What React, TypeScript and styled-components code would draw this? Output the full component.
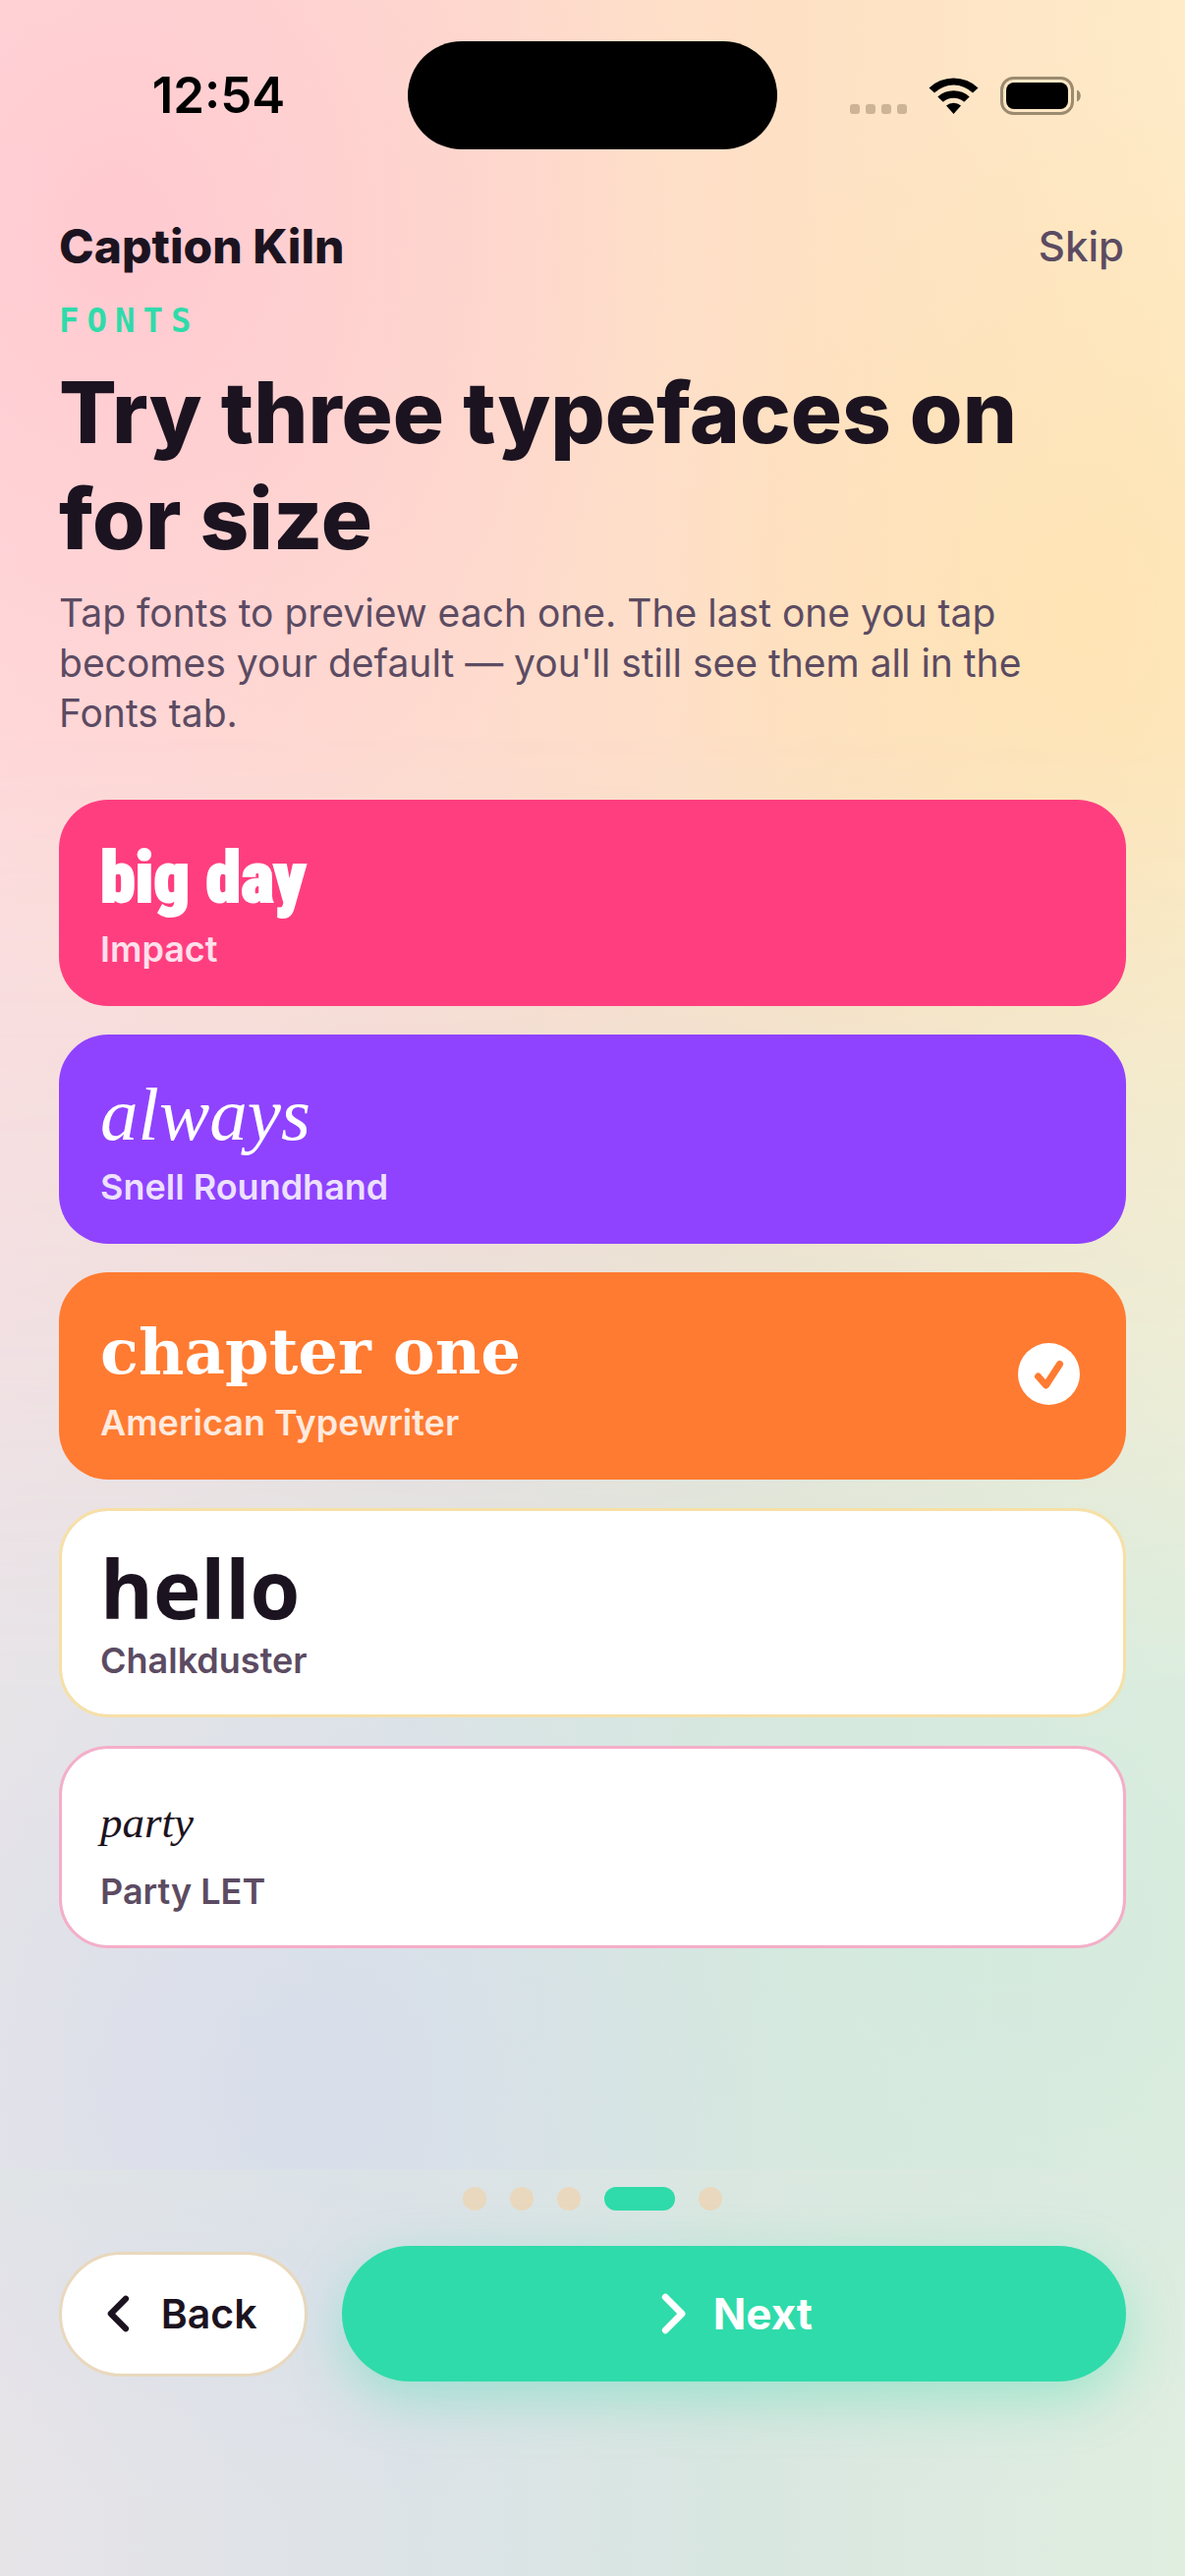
import { useState } from "react";
import styled, { createGlobalStyle, css } from "styled-components";

const ink = "#1c1320";
const muted = "#5c4b62";
const mint = "#2fdbaa";
const sand = "#e9d8bd";

const GlobalStyle = createGlobalStyle`
  *, *::before, *::after { box-sizing: border-box; }
  body {
    margin: 0;
    font-family: Inter, "Noto Sans", sans-serif;
    color: ${ink};
    -webkit-font-smoothing: antialiased;
  }
  button { font: inherit; color: inherit; cursor: pointer; }
`;

const Screen = styled.div`
  position: relative;
  isolation: isolate;
  display: flex;
  flex-direction: column;
  min-height: 100vh;
  background:
    radial-gradient(ellipse 46% 27% at 10% 9%, rgba(255, 194, 205, 0.7), transparent),
    radial-gradient(ellipse 36% 22% at 92% 24%, rgba(255, 224, 168, 0.6), transparent),
    linear-gradient(90deg, #ffdcdc 0%, #fedccd 42%, #fee1c4 68%, #feebc8 100%);

  &::before {
    content: "";
    position: absolute;
    inset: 0;
    z-index: -1;
    background:
      radial-gradient(ellipse 42% 17% at 24% 81%, rgba(213, 220, 236, 0.7), transparent),
      radial-gradient(ellipse 55% 22% at 86% 75%, rgba(208, 234, 220, 0.7), transparent),
      linear-gradient(90deg, #e7e4e8 0%, #dce3e7 35%, #d8e6e1 60%, #e0eee0 100%);
    mask-image: linear-gradient(180deg, transparent 28%, rgba(0, 0, 0, 0.5) 50%, #000 66%);
  }
`;

const StatusBar = styled.div`
  display: grid;
  grid-template-columns: 1fr 376px 1fr;
  align-items: center;
  height: 194px;
`;

const Clock = styled.time`
  padding-left: 30px;
  color: #000;
  text-align: center;
  font-size: 51px;
  font-weight: 600;
  line-height: 60px;
`;

const Island = styled.div`
  height: 110px;
  border-radius: 55px;
  background: #000;
`;

const StatusIcons = styled.div`
  display: flex;
  align-items: center;
  justify-content: flex-end;
  padding-right: 86px;
`;

const Header = styled.header`
  display: flex;
  align-items: center;
  justify-content: space-between;
  height: 114px;
  padding: 0 62px 0 60px;
`;

const Brand = styled.div`
  font-size: 48px;
  font-weight: 800;
  line-height: 60px;
`;

const SkipButton = styled.button`
  padding: 0;
  border: 0;
  background: none;
  color: ${muted};
  font-size: 42px;
  font-weight: 500;
  line-height: 60px;
`;

const Content = styled.main`
  flex: 1;
  padding: 0 60px 60px;
`;

const Eyebrow = styled.p`
  margin: 0;
  color: ${mint};
  font-family: "DejaVu Sans Mono", monospace;
  font-size: 34px;
  font-weight: 700;
  line-height: 36px;
  letter-spacing: 8px;
`;

const Title = styled.h1`
  margin: 22px 0 0;
  font-size: 87px;
  font-weight: 800;
  line-height: 108px;
`;

const Lead = styled.p`
  margin: 16px 0 0;
  color: ${muted};
  font-size: 39px;
  line-height: 51px;
`;

const FontList = styled.div`
  display: grid;
  gap: 29px;
  margin-top: 63px;
`;

const FontCard = styled.button<{ $fill?: string; $edge: string }>`
  display: flex;
  align-items: center;
  justify-content: space-between;
  width: 100%;
  padding: 28px 44px 32px 39px;
  border: 3px solid ${(p) => (p.$fill ? "transparent" : p.$edge)};
  border-radius: 50px;
  background: ${(p) => p.$fill ?? "#fff"};
  background-clip: ${(p) => (p.$fill ? "border-box" : "padding-box")};
  color: ${(p) => (p.$fill ? "#fff" : ink)};
  text-align: left;
`;

type Face = "impact" | "script" | "slab" | "chalk" | "party";

const faces: Record<Face, ReturnType<typeof css>> = {
  impact: css`
    font: 900 72px/98px Impact, "Roboto Condensed", Roboto, sans-serif;
    -webkit-text-stroke: 2px currentColor;
  `,
  script: css`
    font: italic 400 77px/101px "Snell Roundhand", "Liberation Serif", serif;
  `,
  slab: css`
    font: 700 64px/99px "American Typewriter", "DejaVu Serif", serif;
  `,
  chalk: css`
    font: 700 82px/101px Chalkduster, "Open Sans", sans-serif;
  `,
  party: css`
    font: italic 400 45px/94px "Party LET", "Liberation Serif", serif;
  `,
};

const Sample = styled.span<{ $face: Face }>`
  display: block;
  ${(p) => faces[p.$face]}
`;

const FaceName = styled.span<{ $onFill: boolean }>`
  display: block;
  color: ${(p) => (p.$onFill ? "rgba(255, 255, 255, 0.85)" : muted)};
  font-size: 36px;
  font-weight: 600;
  line-height: 46px;
`;

const Footer = styled.footer`
  display: grid;
  gap: 36px;
  padding: 18px 60px 198px;
  background: linear-gradient(180deg, rgba(224, 232, 226, 0.4), transparent 140px);
`;

const Dots = styled.div`
  display: flex;
  justify-content: center;
  gap: 24px;
`;

const Dot = styled.span<{ $active: boolean }>`
  width: ${(p) => (p.$active ? 72 : 24)}px;
  height: 24px;
  border-radius: 12px;
  background: ${(p) => (p.$active ? mint : sand)};
`;

const Actions = styled.div`
  display: flex;
  align-items: center;
  gap: 35px;
`;

const BackButton = styled.button`
  display: flex;
  align-items: center;
  gap: 32px;
  height: 127px;
  padding: 0 48px 0 46px;
  border: 3px solid ${sand};
  border-radius: 64px;
  background: #fff;
  font-size: 41px;
  font-weight: 600;
`;

const NextButton = styled.button`
  display: flex;
  flex: 1;
  align-items: center;
  justify-content: center;
  gap: 28px;
  height: 138px;
  padding: 0 0 0 6px;
  border: 0;
  border-radius: 69px;
  background: ${mint};
  box-shadow: 0 18px 54px rgba(47, 219, 170, 0.35);
  color: #fff;
  font-size: 44px;
  font-weight: 700;
`;

function SignalIcon() {
  return (
    <svg width="260" height="60" viewBox="860 67 260 60" fill="none" aria-hidden="true">
      <g fill="#cdb496">
        <rect x="865" y="106" width="10" height="10" rx="3" />
        <rect x="881" y="106" width="10" height="10" rx="3" />
        <rect x="897" y="106" width="10" height="10" rx="3" />
        <rect x="913" y="106" width="10" height="10" rx="3" />
      </g>
      <g fill="#000">
        <path d="M945.500 89.500a36 36 0 0 1 50 0l-5.500 5a28 28 0 0 0-39 0z" />
        <path d="M954.300 98.500a24 24 0 0 1 32.400 0l-5.500 5.300a16 16 0 0 0-21.400 0z" />
        <path d="M963 107.500a12 12 0 0 1 15 0l-7.500 8.500z" />
      </g>
      <rect x="1019.500" y="79.500" width="72" height="36" rx="12" stroke="#9b8b6f" strokeWidth="3" />
      <rect x="1024" y="84" width="63" height="27" rx="8" fill="#000" />
      <path d="M1096 91.500c5 1.500 5 10.500 0 12z" fill="#9b8b6f" />
    </svg>
  );
}

function Chevron({ direction, size }: { direction: "left" | "right"; size: number }) {
  return (
    <svg width={size * 0.6} height={size} viewBox="0 0 24 40" fill="none" aria-hidden="true">
      <path
        d={direction === "left" ? "M20 4 4 20l16 16" : "M4 4l16 16L4 36"}
        stroke="currentColor"
        strokeWidth="6.500"
        strokeLinecap="round"
        strokeLinejoin="round"
      />
    </svg>
  );
}

function CheckBadge({ color }: { color: string }) {
  return (
    <svg width="63" height="63" viewBox="0 0 63 63" fill="none" aria-hidden="true">
      <circle cx="31.500" cy="31.500" r="31.500" fill="#fff" />
      <path
        d="M20.500 34l8 9L42.500 21.500"
        stroke={color}
        strokeWidth="7"
        strokeLinecap="round"
        strokeLinejoin="round"
      />
    </svg>
  );
}

const fonts: { face: Face; sample: string; name: string; fill: string; edge: string }[] = [
  { face: "impact", sample: "big day", name: "Impact", fill: "#ff3e7f", edge: "#f9b0ca" },
  { face: "script", sample: "always", name: "Snell Roundhand", fill: "#8f43ff", edge: "#cdb2fa" },
  { face: "slab", sample: "chapter one", name: "American Typewriter", fill: "#ff7b31", edge: "#fac9a8" },
  { face: "chalk", sample: "hello", name: "Chalkduster", fill: "#f5c13c", edge: "#f7e0a6" },
  { face: "party", sample: "party", name: "Party LET", fill: "#ff3e7f", edge: "#f5aec8" },
];

export default function App() {
  const [tapped, setTapped] = useState<Face[]>(["impact", "script", "slab"]);
  const latest = tapped[tapped.length - 1];

  return (
    <Screen>
      <GlobalStyle />
      <StatusBar>
        <Clock>12:54</Clock>
        <Island />
        <StatusIcons>
          <SignalIcon />
        </StatusIcons>
      </StatusBar>
      <Header>
        <Brand>Caption Kiln</Brand>
        <SkipButton type="button">Skip</SkipButton>
      </Header>
      <Content>
        <Eyebrow>FONTS</Eyebrow>
        <Title>Try three typefaces on for size</Title>
        <Lead>
          Tap fonts to preview each one. The last one you tap becomes your default — you'll still
          see them all in the Fonts tab.
        </Lead>
        <FontList>
          {fonts.map((font) => {
            const on = tapped.includes(font.face);
            return (
              <FontCard
                key={font.face}
                type="button"
                aria-pressed={on}
                $fill={on ? font.fill : undefined}
                $edge={font.edge}
                onClick={() => setTapped([...tapped.filter((f) => f !== font.face), font.face])}
              >
                <span>
                  <Sample $face={font.face}>{font.sample}</Sample>
                  <FaceName $onFill={on}>{font.name}</FaceName>
                </span>
                {font.face === latest && <CheckBadge color={font.fill} />}
              </FontCard>
            );
          })}
        </FontList>
      </Content>
      <Footer>
        <Dots>
          {[0, 1, 2, 3, 4].map((step) => (
            <Dot key={step} $active={step === 3} />
          ))}
        </Dots>
        <Actions>
          <BackButton type="button">
            <Chevron direction="left" size={38} />
            Back
          </BackButton>
          <NextButton type="button">
            <Chevron direction="right" size={42} />
            Next
          </NextButton>
        </Actions>
      </Footer>
    </Screen>
  );
}
